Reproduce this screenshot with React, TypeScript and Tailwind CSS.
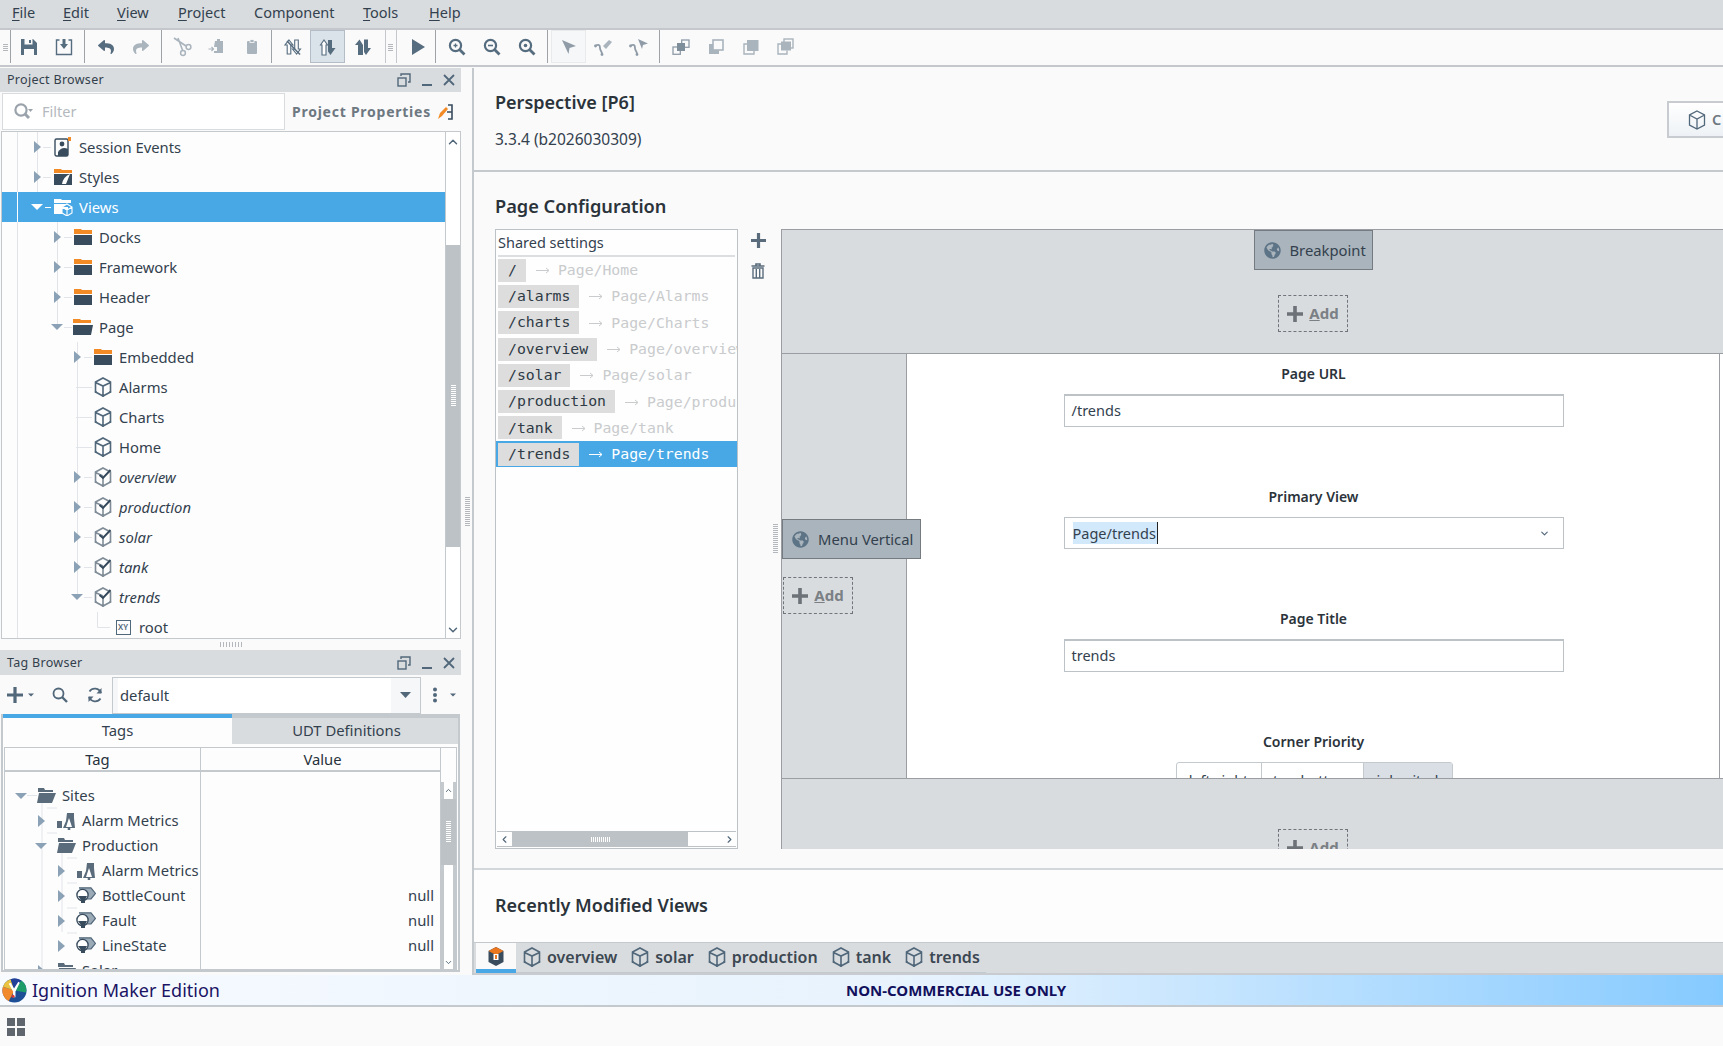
import React from "react";
import { FaGlobeAmericas, FaReply, FaShare } from "react-icons/fa";
import { ChevronUp, ChevronDown, ChevronLeft, ChevronRight } from "lucide-react";

const I = ({ s = 18, h, children, c = "" }: { s?: number; h?: number; children: React.ReactNode; c?: string }) => (
  <svg width={s} height={h ?? s} viewBox={`0 0 ${s} ${h ?? s}`} className={"shrink-0 " + c}>
    {children}
  </svg>
);

const Arrow = ({ dir, white }: { dir?: "r" | "d"; white?: boolean }) => {
  const col = white ? "#ffffff" : "#8ba2b6";
  if (!dir) return <div className="w-[12px] shrink-0" />;
  return (
    <svg width="12" height="14" viewBox="0 0 12 14" className="shrink-0">
      {dir === "r" ? <path d="M3 1 L10 7 L3 13 Z" fill={col} /> : <path d="M0 4 H12 L6 10 Z" fill={col} />}
    </svg>
  );
};

const Folder = () => (
  <I s={18} h={16}>
    <path d="M0 0 H7 L8 1 H18 V5 H0 Z" fill="#f28a26" />
    <rect y="6" width="18" height="10" fill="#394c5e" />
  </I>
);
const FolderOpen = () => (
  <I s={20} h={16}>
    <path d="M0 0 H7 L8 1 H18 V4 H0 Z" fill="#f28a26" />
    <path d="M0 6 H20 L18 16 H0 Z" fill="#394c5e" />
  </I>
);
const Cube = ({ col = "#51677a" }: { col?: string }) => (
  <I s={18} h={20}>
    <path d="M9 1 L16.5 5 V15 L9 19 L1.5 15 V5 Z M1.5 5.5 L9 9 L16.5 5.5 M9 9 V19" fill="none" stroke={col} strokeWidth="1.6" />
    <circle cx="9" cy="18.6" r="1.3" fill={col} />
    <circle cx="1.8" cy="15" r="1.1" fill={col} />
    <circle cx="16.2" cy="15" r="1.1" fill={col} />
  </I>
);
const CubeEdit = () => (
  <I s={18} h={20}>
    <path d="M9 1 L16.5 5 V15 L9 19 L1.5 15 V5 Z M1.5 5.5 L9 9 M9 9 V19" fill="none" stroke="#7f8c97" strokeWidth="1.6" />
    <circle cx="9" cy="18.6" r="1.3" fill="#7f8c97" />
    <circle cx="1.8" cy="15" r="1.1" fill="#7f8c97" />
    <circle cx="16.2" cy="15" r="1.1" fill="#7f8c97" />
    <path d="M5.5 8 L9 11 L16.5 3" fill="none" stroke="#33475a" strokeWidth="1.9" />
  </I>
);
const SessionIcon = () => (
  <I s={18} h={20}>
    <rect x="1" y="2" width="13" height="17" rx="1.5" fill="none" stroke="#394c5e" strokeWidth="1.4" />
    <circle cx="8" cy="7" r="2.4" fill="#394c5e" />
    <path d="M4 15 Q8 9 14 12 V19 H4 Z" fill="#394c5e" />
    <rect x="14" y="0" width="3" height="4" fill="#f28a26" />
  </I>
);
const StylesIcon = () => (
  <I s={18} h={16}>
    <path d="M0 0 H7 L8 1 H18 V4 H0 Z" fill="#f28a26" />
    <rect y="5" width="18" height="11" fill="#394c5e" />
    <path d="M8 15 Q9 8 16 5 Q14 10 12 15 Z" fill="#fff" />
  </I>
);
const ViewsIcon = () => (
  <I s={19} h={17}>
    <path d="M0 0 H7 L8 1 H17 V4 H0 Z M0 5 H14 V15 H0 Z" fill="#fff" />
    <path d="M13 5 L18 8 V14 L13 17 L8 14 V8 Z M8 8 L13 11 L18 8 M13 11 V17" fill="#48a8e6" stroke="#fff" strokeWidth="1.1" />
  </I>
);
const XY = () => (
  <div className="w-[15px] h-[15px] border border-[#51677a] flex items-center justify-center text-[8px] leading-none font-semibold text-[#51677a] shrink-0">XY</div>
);
const TagFolder = () => (
  <I s={19} h={15}>
    <path d="M1 0 H7 L8 2 H16 V4 H1 Z" fill="#5a6c7c" />
    <path d="M2 5 H19 L15 15 H0 Z" fill="#5a6c7c" />
  </I>
);
const AlarmIcon = () => (
  <I s={18} h={18}>
    <rect x="0" y="9" width="5" height="7" fill="#5a6c7c" />
    <path d="M10 1 H17 V6 L18 16 H6 L9 9 Z" fill="#5a6c7c" />
    <path d="M12 6 L15 15 H9 Z" fill="#fff" />
    <circle cx="12" cy="17" r="1.4" fill="#5a6c7c" />
  </I>
);
const TagIcon = () => (
  <I s={20} h={17}>
    <path d="M3 0.8 H15 L19.5 6.5 L15 12 H7" fill="#9baab7" stroke="#51677a" strokeWidth="1.2" />
    <circle cx="6.5" cy="8" r="5.6" fill="#fff" stroke="#394c5e" strokeWidth="1.4" />
    <path d="M2 9 H11 L9 13 V16 H5 V13 Z" fill="#394c5e" />
  </I>
);

const Logo = () => (
  <svg width="25" height="25" viewBox="0 0 26 26" className="shrink-0">
    <circle cx="13" cy="13" r="12.5" fill="#1c4f96" />
    <path d="M13 13 L1 9 A12.5 12.5 0 0 0 7 24 Z" fill="#f08a2c" />
    <path d="M13 13 L1 9 A12.5 12.5 0 0 1 9 1.2 Z" fill="#e9c341" />
    <path d="M13 13 L9 1.2 A12.5 12.5 0 0 1 20 2.5 Z" fill="#24419a" />
    <path d="M13 13 L20 2.5 A12.5 12.5 0 0 1 25 15 Z" fill="#1e9c6a" />
    <path d="M11.5 14 L7 6 L9 5 L12.5 11 L17 4 L18.5 5 L14 14 V20 H11.5 Z" fill="#fff" />
    <circle cx="11.5" cy="19" r="1.6" fill="#d83a34" />
  </svg>
);

const Sep = ({ c = "" }: { c?: string }) => <div className={"w-px h-[33px] bg-[#9ea3a8] shrink-0 " + c} />;
const SepLight = ({ c = "" }: { c?: string }) => <div className={"w-px h-[33px] bg-[#c4c8cc] shrink-0 " + c} />;
const Grip = ({ c = "" }: { c?: string }) => (
  <div className={"flex flex-col gap-px shrink-0 " + c}>
    <div className="w-[5px] h-px bg-[#b4b8bc]" />
    <div className="w-[5px] h-px bg-[#b4b8bc]" />
    <div className="w-[5px] h-px bg-[#b4b8bc]" />
    <div className="w-[5px] h-px bg-[#b4b8bc]" />
  </div>
);
const Btn = ({ children, active, outline }: { children: React.ReactNode; active?: boolean; outline?: boolean }) => (
  <div
    className={
      "w-[35px] h-[33px] flex items-center justify-center shrink-0 " +
      (active ? "bg-[#dbe3ea] border border-[#b4bdc5] " : "") +
      (outline ? "bg-[#f5f7f8] border border-[#e8eaec] " : "")
    }
  >
    {children}
  </div>
);

const dk = "#566c7f";
const lt = "#a9b4bd";
const mid = "#8f9ca8";
const ZoomIcon = ({ kind }: { kind: string }) => (
  <I s={18}>
    <circle cx="7.5" cy="7.5" r="5.6" fill="none" stroke={dk} strokeWidth="2.2" />
    <path d="M11.5 11.5 L16.5 16.5" stroke={dk} strokeWidth="2.8" />
    {kind === "plus" && <path d="M5.5 7.5 H9.5 M7.5 5.5 V9.5" stroke={dk} strokeWidth="1.3" />}
    {kind === "minus" && <path d="M5 7.5 H10" stroke={dk} strokeWidth="1.6" />}
    {kind === "one" && <circle cx="7.5" cy="7.5" r="1.8" fill={dk} />}
  </I>
);

const Toolbar = () => (
  <div className="h-[39px] flex items-start bg-[#fafafa] shrink-0 border-y-2 border-[#c4c8cc]">
    <Grip c="ml-[3px] mr-[2px] mt-[14px]" />
    <Sep />
    <Btn>
      <I s={18}>
        <path d="M1 1 H13 L17 5 V17 H1 Z" fill={dk} />
        <rect x="4.5" y="1" width="8" height="5.5" fill="#fafafa" />
        <rect x="9" y="2" width="2" height="3" fill={dk} />
        <rect x="4" y="11" width="10" height="6" fill="#fafafa" />
      </I>
    </Btn>
    <Btn>
      <I s={18}>
        <path d="M4.5 2 H1.5 V16.5 H16.5 V2 H13.5" fill="none" stroke={dk} strokeWidth="1.4" />
        <path d="M7.5 1 H10.5 V6 H13 L9 11 L5 6 H7.5 Z" fill={dk} />
      </I>
    </Btn>
    <Sep c="mx-[3px]" />
    <Btn>
      <FaReply size={16} color={dk} />
    </Btn>
    <Btn>
      <FaShare size={16} color={lt} />
    </Btn>
    <Sep c="ml-[3px] mr-[2px]" />
    <Btn>
      <I s={20}>
        <path d="M2 1 L14 9 M6 1 L10.5 13" fill="none" stroke={lt} strokeWidth="1.6" />
        <circle cx="16.5" cy="10" r="2.4" fill="none" stroke={lt} strokeWidth="1.5" />
        <circle cx="11" cy="16" r="2.4" fill="none" stroke={lt} strokeWidth="1.5" />
      </I>
    </Btn>
    <Btn>
      <I s={18}>
        <path d="M7 3 H9 V1 H12 V3 H15 V15 H6 V13 H9 V9 H6 Z" fill={lt} />
        <path d="M0.5 11 H5 M3.5 9 L5.5 11 L3.5 13" fill="none" stroke={lt} strokeWidth="1.2" />
      </I>
    </Btn>
    <Btn>
      <I s={18}>
        <rect x="4" y="3" width="10" height="13" rx="1" fill={lt} />
        <rect x="7" y="1.5" width="4" height="3" fill={lt} stroke="#fafafa" strokeWidth="0.8" />
      </I>
    </Btn>
    <Sep c="ml-[2px] mr-[3px]" />
    <Btn>
      <I s={18}>
        <path d="M5 2 L9 7 H6.8 V16 H3.2 V7 H1 Z M12.5 16 L8.5 11 H10.7 V2 H14.3 V11 H16.5 Z" fill="#fafafa" stroke={dk} strokeWidth="1.1" />
        <path d="M3 3 L16 16.5" stroke={dk} strokeWidth="1.5" />
      </I>
    </Btn>
    <Btn active>
      <I s={18}>
        <path d="M5 2 L8.5 7 H7 V17 H3 V7 H1.5 Z" fill="#fff" stroke={dk} strokeWidth="1.1" />
        <path d="M9 2 H13 V10 H16.5 L11.5 17 L9 13.5 Z" fill={dk} />
      </I>
    </Btn>
    <Btn>
      <I s={18}>
        <path d="M5.5 1.5 L9 7 V17 H4 V7 H1 Z" fill={dk} />
        <path d="M10 1.5 H14 V10 H17 L12 17 L10 14 Z" fill={dk} />
      </I>
    </Btn>
    <SepLight c="ml-[5px]" />
    <Grip c="ml-[2px] mt-[14px]" />
    <SepLight c="ml-[3px] mr-[3px]" />
    <Btn>
      <I s={18}>
        <path d="M3 1 L16 9 L3 17 Z" fill={dk} />
      </I>
    </Btn>
    <Sep c="mr-[3px]" />
    <Btn>
      <ZoomIcon kind="plus" />
    </Btn>
    <Btn>
      <ZoomIcon kind="minus" />
    </Btn>
    <Btn>
      <ZoomIcon kind="one" />
    </Btn>
    <Sep c="mx-[3px]" />
    <Btn outline>
      <I s={18}>
        <path d="M2 2 L16 8 L9.5 10 L8.5 16 Z" fill={mid} />
      </I>
    </Btn>
    <Btn>
      <I s={20}>
        <path d="M1 9 C5 7 6 8 6 11 C6 14 8 14 8 17" fill="none" stroke={mid} strokeWidth="1.8" />
        <circle cx="1.5" cy="9" r="1.4" fill={mid} />
        <circle cx="8" cy="17.5" r="1.4" fill={mid} />
        <path d="M9 9 L15 3 L18 5 L12 12 Z" fill={lt} />
      </I>
    </Btn>
    <Btn>
      <I s={20}>
        <path d="M1 9 C5 7 6 8 6 11 C6 14 8 14 8 17" fill="none" stroke={mid} strokeWidth="1.8" />
        <circle cx="1.5" cy="9" r="1.4" fill={mid} />
        <circle cx="8" cy="17.5" r="1.4" fill={mid} />
        <path d="M9 2 L19 6.5 L14 8 L13 12 Z" fill={mid} />
      </I>
    </Btn>
    <Sep c="mx-[3px]" />
    <Btn>
      <I s={18} h={16}>
        <rect x="9.7" y="1" width="7.3" height="7.3" fill="#fafafa" stroke={mid} strokeWidth="1.3" />
        <rect x="1" y="8" width="7.3" height="7.3" fill="#fafafa" stroke={mid} strokeWidth="1.3" />
        <rect x="5" y="4" width="8" height="8" fill="#7f8e9b" />
      </I>
    </Btn>
    <Btn>
      <I s={16}>
        <rect x="1" y="5" width="10" height="10" fill={lt} />
        <rect x="5" y="1" width="10" height="10" fill="#fafafa" stroke={lt} strokeWidth="1.6" />
      </I>
    </Btn>
    <Btn>
      <I s={16}>
        <path d="M4 5 H1 V15 H11 V12" fill="none" stroke={lt} strokeWidth="1.4" />
        <rect x="4" y="1" width="11.5" height="11" fill={lt} />
      </I>
    </Btn>
    <Btn>
      <I s={17}>
        <rect x="7" y="1" width="9" height="9" fill="none" stroke={lt} strokeWidth="1.4" />
        <rect x="4" y="3.5" width="10" height="9" fill={lt} />
        <path d="M4 6 H1 V16 H10 V12.5" fill="none" stroke={lt} strokeWidth="1.4" />
      </I>
    </Btn>
  </div>
);

const PanelTitle = ({ title }: { title: string }) => (
  <div className="h-[24px] bg-[#d9dcdf] flex items-center pl-[7px] pr-[5px] text-[12.5px] text-[#33404c] shrink-0">
    <span className="flex-1 tracking-[0.3px]">{title}</span>
    <I s={14} c="mr-[11px]">
      <rect x="1" y="5" width="8" height="8" fill="none" stroke="#51677a" strokeWidth="1.4" />
      <path d="M4 3 V1 H13 V9 H11" fill="none" stroke="#51677a" strokeWidth="1.4" />
    </I>
    <div className="w-[10px] h-[2px] bg-[#51677a] self-end mb-[6px] mr-[10px]" />
    <I s={14}>
      <path d="M2 2 L12 12 M12 2 L2 12" stroke="#51677a" strokeWidth="1.8" />
    </I>
  </div>
);

type Row = { d: number; label: string; icon?: React.ReactNode; arrow?: "r" | "d"; italic?: boolean; sel?: boolean };

const projRows: Row[] = [
  { d: 0, label: "Session Events", icon: <SessionIcon />, arrow: "r" },
  { d: 0, label: "Styles", icon: <StylesIcon />, arrow: "r" },
  { d: 0, label: "Views", icon: <ViewsIcon />, arrow: "d", sel: true },
  { d: 1, label: "Docks", icon: <Folder />, arrow: "r" },
  { d: 1, label: "Framework", icon: <Folder />, arrow: "r" },
  { d: 1, label: "Header", icon: <Folder />, arrow: "r" },
  { d: 1, label: "Page", icon: <FolderOpen />, arrow: "d" },
  { d: 2, label: "Embedded", icon: <Folder />, arrow: "r" },
  { d: 2, label: "Alarms", icon: <Cube /> },
  { d: 2, label: "Charts", icon: <Cube /> },
  { d: 2, label: "Home", icon: <Cube /> },
  { d: 2, label: "overview", icon: <CubeEdit />, arrow: "r", italic: true },
  { d: 2, label: "production", icon: <CubeEdit />, arrow: "r", italic: true },
  { d: 2, label: "solar", icon: <CubeEdit />, arrow: "r", italic: true },
  { d: 2, label: "tank", icon: <CubeEdit />, arrow: "r", italic: true },
  { d: 2, label: "trends", icon: <CubeEdit />, arrow: "d", italic: true },
  { d: 3, label: "root", icon: <XY /> },
];

const TreeLines = ({ segs, w, h, col = "#e1e5ea" }: { segs: string; w: number; h: number; col?: string }) => (
  <svg width={w} height={h} className="absolute left-0 top-0 pointer-events-none">
    <path d={segs} stroke={col} strokeWidth="1" fill="none" />
  </svg>
);

const projLines =
  "M15.5 0 V510 M35.5 0 V75 M41 15.5 H49 M41 45.5 H49 M55.5 90 V195 M62 105.5 H70 M62 135.5 H70 M62 165.5 H70 M62 195.5 H70 M75.5 210 V465 M82 225.5 H90 M74 255.5 H90 M74 285.5 H90 M74 315.5 H90 M82 345.5 H90 M82 375.5 H90 M82 405.5 H90 M82 435.5 H90 M82 465.5 H90 M95.5 480 V495.5 H108";

const ProjectTree = () => (
  <div className="flex-1 min-w-0 relative bg-[#fdfdfd] overflow-hidden">
    <TreeLines segs={projLines} w={442} h={510} />
    {projRows.map((r) => (
      <div
        key={r.label}
        className={"relative h-[30px] flex items-center text-[14.8px] shrink-0 " + (r.sel ? "bg-[#48a8e6] text-white" : "text-[#33414e]")}
        style={{ paddingLeft: 29 + 20 * r.d }}
      >
        <Arrow dir={r.arrow} white={r.sel} />
        <div className="ml-[11px] w-[18px] flex items-center justify-center shrink-0">{r.icon}</div>
        <span className={"ml-[7px] " + (r.italic ? "italic" : "")}>{r.label}</span>
      </div>
    ))}
    <TreeLines segs="M15.5 60 V90 M43 75.5 H49" w={442} h={510} col="#ffffff" />
  </div>
);

const VScroll = () => (
  <div className="w-[15px] bg-white border-l border-[#c4c9cd] flex flex-col shrink-0">
    <div className="h-[113px] flex flex-col items-center pt-[3px]">
      <ChevronUp size={14} color="#51677a" strokeWidth={2.5} />
    </div>
    <div className="h-[302px] bg-[#bcc2c6] flex items-center justify-center">
      <div className="w-[5px] h-[22px] flex flex-col gap-px">
        {Array.from({ length: 11 }).map((_, i) => (
          <div key={i} className="h-px bg-white" />
        ))}
      </div>
    </div>
    <div className="flex-1 flex flex-col items-center justify-end pb-[1px]">
      <ChevronDown size={14} color="#51677a" strokeWidth={2.5} />
    </div>
  </div>
);

type TRow = { d: number; label: string; icon: React.ReactNode; arrow?: "r" | "d"; val?: string };
const tagRows: TRow[] = [
  { d: 0, label: "Sites", icon: <TagFolder />, arrow: "d" },
  { d: 1, label: "Alarm Metrics", icon: <AlarmIcon />, arrow: "r" },
  { d: 1, label: "Production", icon: <TagFolder />, arrow: "d" },
  { d: 2, label: "Alarm Metrics", icon: <AlarmIcon />, arrow: "r" },
  { d: 2, label: "BottleCount", icon: <TagIcon />, arrow: "r", val: "null" },
  { d: 2, label: "Fault", icon: <TagIcon />, arrow: "r", val: "null" },
  { d: 2, label: "LineState", icon: <TagIcon />, arrow: "r", val: "null" },
  { d: 1, label: "Solar", icon: <TagFolder />, arrow: "r" },
];

const TagBrowser = () => (
  <div className="flex flex-col h-[325px] shrink-0 mr-[2px]">
    <div className="pt-[1px] bg-[#d9dcdf] shrink-0">
      <PanelTitle title="Tag Browser" />
    </div>
    <div className="h-[39px] flex items-center pt-[1px] shrink-0">
      <I s={16} c="ml-[7px]">
        <path d="M8 0 V16 M0 8 H16" stroke="#51677a" strokeWidth="3.2" />
      </I>
      <I s={6} c="ml-[5px]">
        <path d="M0 1.5 H6 L3 4.5 Z" fill="#51677a" />
      </I>
      <I s={16} c="ml-[18px]">
        <circle cx="6.5" cy="6.5" r="5" fill="none" stroke="#51677a" strokeWidth="1.8" />
        <path d="M10 10 L15 15" stroke="#51677a" strokeWidth="2.4" />
      </I>
      <I s={16} c="ml-[19px]">
        <path d="M14 6 A6.5 6.5 0 0 0 2.5 4.5 M2 10 A6.5 6.5 0 0 0 13.5 11.5" fill="none" stroke="#51677a" strokeWidth="1.8" />
        <path d="M14.5 1 V6.5 H9.5 Z M1.5 15 V9.5 H6.5 Z" fill="#51677a" />
      </I>
      <div className="ml-[9px] w-[309px] h-[37px] border border-[#c4c9cd] bg-[#f5f7f8] flex items-center shrink-0">
        <div className="flex-1 h-full bg-white flex items-center pl-[2px] ml-[5px] text-[14.8px] text-[#33414e]">default</div>
        <div className="w-[29px] flex items-center justify-center">
          <I s={11} h={7}>
            <path d="M0 0 H11 L5.5 6 Z" fill="#51677a" />
          </I>
        </div>
      </div>
      <I s={6} h={16} c="ml-[11px]">
        <circle cx="3" cy="2.5" r="2" fill="#51677a" />
        <circle cx="3" cy="8" r="2" fill="#51677a" />
        <circle cx="3" cy="13.5" r="2" fill="#51677a" />
      </I>
      <I s={6} c="ml-[12px]">
        <path d="M0 1.5 H6 L3 4.5 Z" fill="#51677a" />
      </I>
    </div>
    <div className="flex-1 min-h-0 mx-[1px] mb-[3px] border-[2px] border-[#c4c9cd] border-t-0 flex flex-col">
      <div className="h-[30px] flex shrink-0 text-[14.8px] text-[#33414e]">
        <div className="w-[229px] bg-[#fdfdfd] border-t-[4px] border-[#48a8e6] flex items-center justify-center pb-[2px]">Tags</div>
        <div className="flex-1 bg-[#d9dcdf] border-t-[4px] border-[#c4c9cd] flex items-center justify-center pl-[3px] pb-[2px]">UDT Definitions</div>
      </div>
      <div className="flex-1 min-h-0 bg-[#fdfdfd] pt-[3px] px-[1px] flex flex-col">
        <div className="flex-1 min-h-0 border border-[#c4c9cd] flex">
          <div className="flex-1 min-w-0 flex flex-col">
            <div className="h-[24px] flex border-b-[2px] border-[#c4c9cd] text-[14.8px] text-[#28323c] shrink-0 items-stretch">
              <div className="w-[196px] border-r border-[#c4c9cd] flex items-center justify-center pr-[10px]">Tag</div>
              <div className="flex-1 flex items-center justify-center pl-[4px]">Value</div>
            </div>
            <div className="flex-1 min-h-0 flex overflow-hidden">
              <div className="w-[196px] border-r border-[#c4c9cd] pt-[11px] relative overflow-hidden shrink-0">
                <TreeLines
                  segs="M37 26 V210 M42 36 H52 M42 61 H52 M57 76 V160 M62 86 H72 M62 111 H72 M62 136 H72 M62 161 H72 M22 23.5 H32"
                  w={196}
                  h={210}
                />
                {tagRows.map((r, i) => (
                  <div key={i} className="relative h-[25px] flex items-center text-[14.8px] text-[#33414e] whitespace-nowrap" style={{ paddingLeft: 10 + 20 * r.d }}>
                    <Arrow dir={r.arrow} />
                    <div className="ml-[10px] w-[18px] flex items-center justify-center shrink-0">{r.icon}</div>
                    <span className="ml-[7px]">{r.label}</span>
                  </div>
                ))}
              </div>
              <div className="flex-1 pt-[11px]">
                {tagRows.map((r, i) => (
                  <div key={i} className="h-[25px] flex items-center justify-end pr-[6px] text-[14.8px] text-[#33414e]">
                    {r.val}
                  </div>
                ))}
              </div>
            </div>
          </div>
          <div className="w-[16px] border-l border-[#c4c9cd] flex flex-col shrink-0">
            <div className="h-[34px]" />
            <div className="h-[17px] bg-white border-x-[3px] border-[#c4c9cd] flex items-center justify-center">
              <ChevronUp size={11} color="#51677a" strokeWidth={2.5} />
            </div>
            <div className="h-[66px] bg-[#bcc2c6] flex items-center justify-center">
              <div className="w-[5px] h-[22px] flex flex-col gap-px">
                {Array.from({ length: 11 }).map((_, i) => (
                  <div key={i} className="h-px bg-white" />
                ))}
              </div>
            </div>
            <div className="flex-1 border-x-[3px] border-[#c4c9cd] bg-white flex items-end justify-center pb-[1px]">
              <ChevronDown size={11} color="#51677a" strokeWidth={2.5} />
            </div>
          </div>
        </div>
      </div>
    </div>
  </div>
);

const routes = [
  { r: "/", t: "Page/Home" },
  { r: "/alarms", t: "Page/Alarms" },
  { r: "/charts", t: "Page/Charts" },
  { r: "/overview", t: "Page/overview" },
  { r: "/solar", t: "Page/solar" },
  { r: "/production", t: "Page/production" },
  { r: "/tank", t: "Page/tank" },
  { r: "/trends", t: "Page/trends", sel: true },
];

const RouteList = () => (
  <div className="w-[243px] h-[620px] border border-[#bcc2c6] bg-[#fefefe] flex flex-col shrink-0">
    <div className="h-[27px] mx-[2px] border-b-[2px] border-[#dcdfe2] flex items-center text-[14.5px] text-[#33414e] shrink-0">Shared settings</div>
    <div className="flex-1 min-h-0 overflow-hidden flex flex-col font-['DejaVu_Sans_Mono'] text-[14.8px]">
      {routes.map((x) => (
        <div key={x.r} className={"h-[26.3px] flex items-center pl-[2px] whitespace-nowrap overflow-hidden shrink-0 " + (x.sel ? "bg-[#48a8e6] text-white" : "text-[#c9cbcd]")}>
          <span className="bg-[#dddddd] text-[#2e3a45] h-[23px] flex items-center pl-[10px] pr-[9px] leading-none shrink-0">{x.r}</span>
          <I s={16} h={10} c="ml-[9px] mr-[7px]">
            <path d="M1 5.5 H14 M11 3 L14 5.5 L11 8" fill="none" stroke={x.sel ? "#fff" : "#c9cbcd"} strokeWidth="1" />
          </I>
          <span>{x.t}</span>
        </div>
      ))}
    </div>
    <div className="h-[16px] mx-[1px] mb-[1px] border-t border-[#bcc2c6] border-b border-b-[#bcc2c6] flex items-stretch shrink-0">
      <div className="w-[15px] flex items-center justify-center">
        <ChevronLeft size={11} color="#51677a" strokeWidth={2.5} />
      </div>
      <div className="w-[176px] bg-[#bcc2c6] flex items-center justify-center gap-px">
        {Array.from({ length: 10 }).map((_, i) => (
          <div key={i} className="w-px h-[5px] bg-white" />
        ))}
      </div>
      <div className="flex-1 flex items-center justify-end pr-[1px]">
        <ChevronRight size={11} color="#51677a" strokeWidth={2.5} />
      </div>
    </div>
  </div>
);

const GlobeBtn = ({ label, c }: { label: string; c: string }) => (
  <div className={"bg-[#aab4bc] border border-[#757b81] h-[40px] flex items-center text-[14.8px] text-[#33414e] shrink-0 " + c}>
    <FaGlobeAmericas size={17} color="#5d7487" className="shrink-0" />
    <span className="ml-[9px]">{label}</span>
  </div>
);

const AddBtn = ({ c = "" }: { c?: string }) => (
  <div className={"w-[70px] h-[37px] border border-dashed border-[#6f757b] flex items-center justify-center text-[15px] font-bold text-[#7b8085] shrink-0 " + c}>
    <I s={16}>
      <path d="M8 0 V16 M0 8 H16" stroke="#6c7278" strokeWidth="3.6" />
    </I>
    <span className="ml-[6px]">
      <span className="underline">A</span>dd
    </span>
  </div>
);

const Label = ({ t }: { t: string }) => <div className="text-[14px] font-semibold text-[#2b333b] text-center leading-[20px]">{t}</div>;

const Canvas = () => (
  <div className="flex-1 min-w-0 h-[620px] border-l border-t border-[#9a9ea2] bg-[#d9dcdf] flex flex-col overflow-hidden">
    <div className="h-[124px] border-b border-[#9a9ea2] flex flex-col items-center pl-[125px] pr-[4px] shrink-0">
      <GlobeBtn label="Breakpoint" c="w-[119px] pl-[9px]" />
      <AddBtn c="mt-[25px]" />
    </div>
    <div className="h-[425px] flex shrink-0 border-b border-[#9a9ea2]">
      <div className="w-[125px] border-r border-[#9a9ea2] pt-[165px] flex flex-col items-start shrink-0">
        <GlobeBtn label="Menu Vertical" c="w-[139px] pl-[9px] relative z-10" />
        <AddBtn c="mt-[18px] ml-[1px]" />
      </div>
      <div className="w-[813px] bg-white border-r border-[#9a9ea2] shrink-0 pt-[10px] pl-[1px] flex flex-col items-center overflow-hidden">
        <Label t="Page URL" />
        <div className="mt-[10px] w-[500px] h-[33px] border border-[#bcc2c6] border-t-[2px] bg-white flex items-center pl-[7px] text-[14.5px] text-[#33414e] shrink-0">/trends</div>
        <div className="mt-[60px] shrink-0"><Label t="Primary View" /></div>
        <div className="mt-[10px] w-[500px] h-[32px] border border-[#bcc2c6] bg-white flex items-center pl-[8px] pr-[13px] text-[14.5px] text-[#33414e] shrink-0">
          <span className="bg-[#d2e8fb] h-[22px] leading-[22px] pr-px border-r border-[#222]">Page/trends</span>
          <div className="flex-1" />
          <ChevronDown size={11} color="#51677a" strokeWidth={2.5} />
        </div>
        <div className="mt-[60px] shrink-0"><Label t="Page Title" /></div>
        <div className="mt-[10px] w-[500px] h-[33px] border border-[#bcc2c6] border-t-[2px] bg-white flex items-center pl-[7px] text-[14.5px] text-[#33414e] shrink-0">trends</div>
        <div className="mt-[60px] shrink-0"><Label t="Corner Priority" /></div>
        <div className="mt-[10px] ml-[1px] h-[38px] flex shrink-0 border border-[#c4c9cd] rounded-t-[3px] text-[14.5px] text-[#33414e]">
          <div className="w-[85px] border-r border-[#c4c9cd] flex items-center justify-center">left-right</div>
          <div className="w-[102px] border-r border-[#c4c9cd] flex items-center justify-center">top-bottom</div>
          <div className="w-[88px] bg-[#d9dfe5] flex items-center justify-center">inherited</div>
        </div>
      </div>
      <div className="flex-1 bg-white" />
    </div>
    <div className="flex-1 min-h-0 flex flex-col items-center pl-[125px] pr-[4px] pt-[50px] overflow-hidden">
      <AddBtn />
    </div>
  </div>
);

const recents = ["overview", "solar", "production", "tank", "trends"];

export default function App() {
  return (
    <div className="w-[1723px] h-[1046px] overflow-hidden flex flex-col bg-[#fafafa] font-['Noto_Sans',sans-serif]">
      <div className="h-[28px] bg-[#d9dcdf] flex items-center pl-[12px] pb-[2px] text-[14.5px] text-[#33414e] shrink-0">
        {[
          ["F", "ile", "w-[51px]"],
          ["E", "dit", "w-[54px]"],
          ["V", "iew", "w-[61px]"],
          ["P", "roject", "w-[76px]"],
          ["", "Component", "w-[109px]"],
          ["T", "ools", "w-[66px]"],
          ["H", "elp", "w-[50px]"],
        ].map(([a, b, w]) => (
          <div key={a + b} className={w + " shrink-0"}>
            <span className="underline underline-offset-2">{a}</span>
            {b}
          </div>
        ))}
      </div>
      <Toolbar />
      <div className="flex-1 min-h-0 flex border-t border-[#fafafa]">
        <div className="w-[463px] shrink-0 flex flex-col">
          <div className="h-[582px] shrink-0 flex flex-col mr-[2px]">
            <PanelTitle title="Project Browser" />
            <div className="h-[39px] flex items-center shrink-0">
              <div className="w-[283px] h-[37px] ml-[2px] bg-white border border-[#d9dcdf] flex items-center pl-[10px] text-[14.5px] text-[#b4b9be] shrink-0">
                <I s={20}>
                  <circle cx="8" cy="8" r="5.6" fill="none" stroke="#9aa3ab" strokeWidth="2.2" />
                  <path d="M12 12 L16 16" stroke="#9aa3ab" strokeWidth="3" />
                  <path d="M15 7 H20 L17.5 10 Z" fill="#9aa3ab" />
                </I>
                <span className="ml-[9px]">Filter</span>
              </div>
              <span className="ml-[7px] text-[14px] font-bold text-[#6e7881] tracking-[0.75px] whitespace-nowrap">Project Properties</span>
              <I s={16} c="ml-[6px]">
                <path d="M11 1 H15 V15 H11 M15 8 H10" fill="none" stroke="#394c5e" strokeWidth="1.6" />
                <path d="M1 15 L3 9 L9 3 L11 5 L5 12 Z" fill="#f28a26" />
              </I>
            </div>
            <div className="flex-1 min-h-0 ml-[1px] border-[1.5px] border-[#c4c9cd] flex overflow-hidden">
              <ProjectTree />
              <VScroll />
            </div>
            <div className="h-[11px] flex items-center justify-center gap-[2px] shrink-0">
              {Array.from({ length: 8 }).map((_, i) => (
                <div key={i} className="w-px h-[5px] bg-[#b4b8bc]" />
              ))}
            </div>
          </div>
          <TagBrowser />
        </div>
        <div className="w-[9px] shrink-0 flex items-center justify-start pl-[2px] pb-[20px]">
          <div className="w-[5px] h-[30px] flex flex-col gap-px overflow-hidden">
            {Array.from({ length: 15 }).map((_, i) => (
              <div key={i} className="h-px bg-[#b4b8bc] shrink-0" />
            ))}
          </div>
        </div>
        <div className="flex-1 min-w-0 border-l-[2px] border-[#c4c9cd] flex flex-col">
          <div className="h-[104px] flex shrink-0 border-b-[2px] border-[#c4c9cd]">
            <div className="flex-1 pl-[21px] pt-[21px]">
              <div className="text-[18px] leading-[26px] font-semibold text-[#2b333b]">Perspective [P6]</div>
              <div className="mt-[14px] text-[15.5px] leading-[20px] text-[#33414e]">3.3.4 (b2026030309)</div>
            </div>
            <div className="w-[56px] h-[37px] mt-[33px] bg-gradient-to-b from-white to-[#eef2f6] border-2 border-r-0 border-[#c8ccd0] flex items-center pl-[19px] text-[14.5px] font-semibold text-[#6e7881] overflow-hidden shrink-0">
              <I s={18} h={20}>
                <path d="M9 1 L16.5 5 V15 L9 19 L1.5 15 V5 Z M1.5 5 L9 9 L16.5 5 M9 9 V19" fill="none" stroke="#51677a" strokeWidth="1.3" />
              </I>
              <span className="ml-[6px]">C</span>
            </div>
          </div>
          <div className="h-[698px] shrink-0 pl-[21px] pt-[21px] flex flex-col border-b-[2px] border-[#d4d7da]">
            <div className="text-[18.2px] leading-[26px] font-semibold text-[#2b333b]">Page Configuration</div>
            <div className="mt-[10px] flex">
              <RouteList />
              <div className="w-[43px] shrink-0 flex flex-col items-center pr-[3px] pt-[4px]">
                <I s={15}>
                  <path d="M7.5 0 V15 M0 7.5 H15" stroke="#5a6c7c" strokeWidth="3.2" />
                </I>
                <I s={14} h={16} c="mt-[15px]">
                  <path d="M0.5 3 H13.5 M5 3 V1 H9 V3" fill="none" stroke="#5a6c7c" strokeWidth="1.6" />
                  <path d="M2 5 H12 V15 H2 Z M5.3 6 V15 M8.7 6 V15" fill="none" stroke="#5a6c7c" strokeWidth="1.4" />
                </I>
                <div className="self-end mt-[245px] w-[5px] h-[30px] flex flex-col gap-px overflow-hidden">
                  {Array.from({ length: 15 }).map((_, i) => (
                    <div key={i} className="h-px bg-[#b4b8bc] shrink-0" />
                  ))}
                </div>
              </div>
              <Canvas />
            </div>
          </div>
          <div className="flex-1 min-h-0 bg-[#fdfdfd] flex flex-col">
            <div className="h-[72px] pl-[21px] pt-[22px] shrink-0">
              <div className="text-[18px] leading-[26px] font-semibold text-[#2b333b]">Recently Modified Views</div>
            </div>
            <div className="h-[31px] bg-[#d9dcdf] border-t border-[#c4c9cd] flex items-stretch pl-[2px] shrink-0">
              <div className="w-[40px] bg-[#fafafa] border-b-[4px] border-[#48a8e6] flex items-center justify-center shrink-0">
                <I s={18} h={21}>
                  <path d="M9 1 L16.5 5 V16 L9 20 L1.5 16 V5 Z" fill="#394c5e" />
                  <path d="M9 1 L16.5 5 L9 9 L1.5 5 Z" fill="#e8771f" />
                  <rect x="6.5" y="8" width="5" height="6" fill="#fff" />
                  <rect x="8" y="9" width="2" height="4" fill="#e8771f" />
                </I>
              </div>
              <div className="flex items-center gap-[14px] pl-[7px] pr-[6px] pb-[2px] border-b-[1px] border-[#c4c9cd]">
                {recents.map((t) => (
                  <div key={t} className="flex items-center gap-[6px] text-[16px] font-semibold text-[#3c4852] shrink-0">
                    <Cube />
                    {t}
                  </div>
                ))}
              </div>
            </div>
            <div className="flex-1 bg-[#c8ccd0]" />
          </div>
        </div>
      </div>
      <div className="h-[32px] flex items-center pt-[1px] shrink-0 bg-gradient-to-r from-[#f8fbff] via-[#e6f2fd] via-55% to-[#85caff] border-b-[2px] border-[#c4c9cd]">
        <div className="ml-[2px]"><Logo /></div>
        <span className="ml-[5px] text-[18px] text-[#1b1464] whitespace-nowrap">Ignition Maker Edition</span>
        <span className="ml-[626px] text-[15px] font-bold text-[#12105c] whitespace-nowrap">NON-COMMERCIAL USE ONLY</span>
      </div>
      <div className="h-[39px] flex items-center pl-[7px] shrink-0 bg-[#fafafa]">
        <div className="grid grid-cols-2 gap-[2px]">
          <div className="w-[8px] h-[8px] bg-[#5f666d]" />
          <div className="w-[8px] h-[8px] bg-[#5f666d]" />
          <div className="w-[8px] h-[8px] bg-[#5f666d]" />
          <div className="w-[8px] h-[8px] bg-[#5f666d]" />
        </div>
      </div>
    </div>
  );
}
